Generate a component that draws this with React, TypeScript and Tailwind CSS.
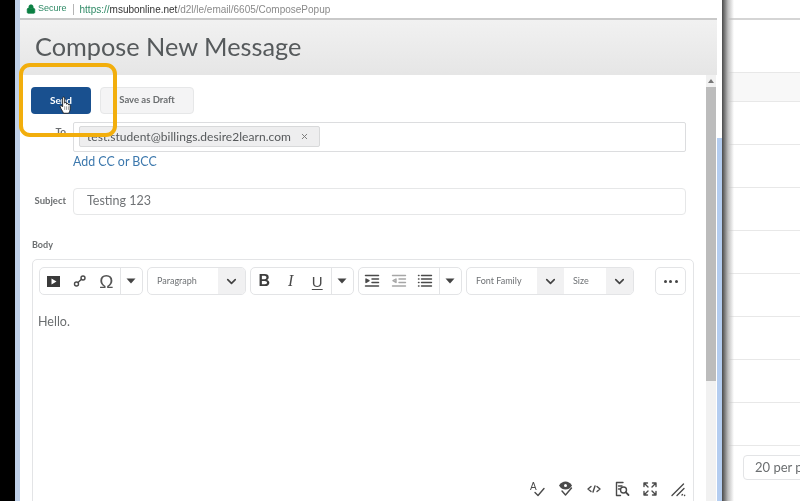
import React from "react";
import { Lock, X, ChevronDown } from "lucide-react";

const Caret = () => (
  <svg width="10" height="6" viewBox="0 0 10 6"><path d="M0.5 0.5h9L5 5.5z" fill="#444" /></svg>
);
const Chev = () => <ChevronDown size={15} strokeWidth={2.6} color="#444" />;

const I = ({ children }: { children: React.ReactNode }) => (
  <svg width="18" height="18" viewBox="0 0 18 18" fill="none" stroke="#4a4a4a" strokeWidth="1.4" strokeLinecap="round" strokeLinejoin="round">
    {children}
  </svg>
);

function Btn({ children }: { children: React.ReactNode }) {
  return <div className="flex h-full w-[26.5px] items-center justify-center">{children}</div>;
}

function Group({ children, w }: { children: React.ReactNode; w: string }) {
  return (
    <div className={`flex h-[28px] items-center rounded-[5px] border border-[#e3e4e6] bg-white ${w}`}>{children}</div>
  );
}

function SplitSel({ label, w }: { label: string; w: string }) {
  return (
    <div className={`flex h-full items-center justify-between ${w}`}>
      <span className="pl-[9px] text-[9px] text-[#6f7275]">{label}</span>
      <span className="flex h-full w-[27px] items-center justify-center bg-[#f1f1f2]">
        <Chev />
      </span>
    </div>
  );
}

function Caretbox() {
  return (
    <div className="flex h-full flex-1 items-center justify-center border-l border-[#e3e4e6]">
      <Caret />
    </div>
  );
}

export default function App() {
  return (
    <div className="relative flex h-[501px] w-[800px] overflow-hidden bg-white font-['Lato',sans-serif] blur-[0.45px]">
      <div className="w-[15px] shrink-0 bg-black" />
      <div className="w-[5px] shrink-0 bg-[#bfd0e8]" />

      <div className="flex w-[697px] shrink-0 flex-col overflow-hidden bg-white">
        <div className="flex h-[18px] shrink-0 items-center pl-[6px] font-['Liberation_Sans',sans-serif] text-[10px]">
          <Lock size={10} fill="#0b8043" color="#0b8043" />
          <span className="ml-[2px] text-[9px] text-[#2f8a66]">Secure</span>
          <span className="mx-[6px] h-[11px] w-px bg-[#b5b5b5]" />
          <span>
            <span className="text-[#2f8a66]">https://</span>
            <span className="text-[#333]">msubonline.net</span>
            <span className="text-[#8a8a8a]">/d2l/le/email/6605/ComposePopup</span>
          </span>
        </div>
        <div className="flex h-[57px] shrink-0 items-center border-t-2 border-b border-t-[#c9c9c9] border-b-[#e6e6e6] bg-gradient-to-b from-[#f1f1f1] to-[#e6e6e6] pl-[15px]">
          <h1 className="text-[25.3px] font-normal text-[#565a5c]">Compose New Message</h1>
        </div>

        <div className="flex min-h-0 flex-1">
          <main className="w-[686px] shrink-0 overflow-hidden">
            <div className="mt-[12px] ml-[11px] flex gap-[9px]">
              <button className="flex h-[27px] w-[60px] items-center justify-center rounded-[4px] bg-[#19508f] text-[10px] font-bold text-white">
                Send
              </button>
              <button className="flex h-[27px] w-[94px] items-center justify-center rounded-[4px] border border-[#e6e7e8] bg-[#f4f4f5] text-[9.5px] font-bold text-[#6b6e70]">
                Save as Draft
              </button>
            </div>

            <div className="mt-[8px] flex items-start">
              <label className="w-[46px] pt-[2px] text-right text-[10px] font-bold text-[#6b6e70]">To</label>
              <div className="ml-[7px] flex h-[30px] w-[613px] items-start rounded-[2px] border border-[#dcdddf] px-[5px] pt-[3px]">
                <div className="flex h-[21px] w-[241px] items-center justify-between rounded-[2px] border border-[#d8d9da] bg-[#eeeeef] pl-[7px] pr-[10px] text-[12px] tracking-[0.05px] whitespace-nowrap text-[#55585a]">
                  test.student@billings.desire2learn.com
                  <X size={9} strokeWidth={2.5} color="#777" />
                </div>
              </div>
            </div>
            <div className="mt-[1px] ml-[53px] text-[12.4px] leading-[18px] text-[#3c78ad]">Add CC or BCC</div>

            <div className="mt-[17px] flex items-center">
              <label className="w-[46px] text-right text-[9.5px] font-bold text-[#6b6e70]">Subject</label>
              <div className="ml-[7px] flex h-[27px] w-[613px] items-center rounded-[4px] border border-[#e6e7e8] pl-[13px] text-[12.5px] text-[#707376]">
                Testing 123
              </div>
            </div>

            <div className="mt-[24px] ml-[12px] text-[9px] leading-[12px] font-bold text-[#6b6e70]">Body</div>

            <div className="mt-[8px] ml-[12px] flex h-[250px] w-[662px] flex-col rounded-[5px] border border-[#e3e4e6] pt-[7px]">
              <div className="flex h-[28px] items-center pl-[6px]">
                <div className="flex gap-[4px]">
                  <Group w="w-[104px]">
                    <Btn><svg width="13" height="11" viewBox="0 0 13 11"><path fillRule="evenodd" d="M0 0h13v11H0zM4.500 2.500v6L9.500 5.500z" fill="#3a3a3a" /></svg></Btn>
                    <Btn><I><circle cx="5.500" cy="12" r="2" /><circle cx="12" cy="6" r="2" /><path d="M7 10.600l3.500-3.300" /></I></Btn>
                    <Btn><span className="font-['Liberation_Sans',sans-serif] text-[19px] leading-none text-[#555]">Ω</span></Btn>
                    <Caretbox />
                  </Group>
                  <Group w="w-[99px] overflow-hidden">
                    <SplitSel label="Paragraph" w="w-full" />
                  </Group>
                  <Group w="w-[104px]">
                    <Btn><span className="font-['Liberation_Sans',sans-serif] text-[16px] font-bold text-[#3d3d3d]">B</span></Btn>
                    <Btn><span className="font-['Liberation_Serif',serif] text-[16px] text-[#4a4a4a] italic">I</span></Btn>
                    <Btn><span className="font-['Liberation_Sans',sans-serif] text-[15px] leading-[15px] text-[#4a4a4a] underline underline-offset-2">U</span></Btn>
                    <Caretbox />
                  </Group>
                  <Group w="w-[104px]">
                    <Btn><I><path d="M2.500 3.500h13M9 7h6.500M9 10.500h6.500M2.500 14h13" strokeWidth="1.500" /><path d="M3 7l3 1.700L3 10.500z" fill="#4a4a4a" /></I></Btn>
                    <Btn><I><g stroke="#a6a6a6"><path d="M2.500 3.500h13M9 7h6.500M9 10.500h6.500M2.500 14h13" /><path d="M6 7L3 8.700 6 10.500z" /></g></I></Btn>
                    <Btn><I><path d="M5.500 3.500h10M5.500 7h10M5.500 10.500h10M5.500 14h10" /><path d="M2.500 3.500h.5M2.500 7h.5M2.500 10.500h.5M2.500 14h.5" /></I></Btn>
                    <Caretbox />
                  </Group>
                  <Group w="w-[168px] overflow-hidden">
                    <SplitSel label="Font Family" w="w-[97px]" />
                    <SplitSel label="Size" w="w-[69px]" />
                  </Group>
                </div>
                <div className="ml-[21px] flex h-[28px] w-[31px] items-center justify-center gap-[2.500px] rounded-[5px] border border-[#e3e4e6]">
                  <span className="h-[3px] w-[3px] rounded-full bg-[#444]" />
                  <span className="h-[3px] w-[3px] rounded-full bg-[#444]" />
                  <span className="h-[3px] w-[3px] rounded-full bg-[#444]" />
                </div>
              </div>

              <p className="mt-[19px] pl-[5px] text-[12.5px] leading-[16px] text-[#6b6e70]">Hello.</p>

              <div className="mt-auto mb-[10px] flex justify-end gap-[10px] pr-[6.500px]">
                <I><text x="1" y="10" fontSize="10" fill="#4a4a4a" stroke="none" fontFamily="Liberation Sans">A</text><path d="M6 12.500l3 3 6-7" /></I>
                <I><path d="M2 5.500C4 2.500 6 1.500 8.500 1.500S13 2.500 15 5.500C13 8.500 11 9.500 8.500 9.500S4 8.500 2 5.500z" fill="#4a4a4a" stroke="none" /><circle cx="8.500" cy="5.500" r="1.500" fill="#fff" stroke="none" /><path d="M5 11l3.500 4 6-7" /></I>
                <I><path d="M6 6.500L3 9l3 2.500M12 6.500L15 9l-3 2.500M10 6l-2 6" /></I>
                <I><path d="M10 2.500H3.500v13h4M5.500 6H9M5.500 9H7" /><circle cx="10.500" cy="10" r="3" /><path d="M12.700 12.200L15.500 15" strokeWidth="1.800" /></I>
                <I><path d="M3 6.500V3h3.500M11.500 3H15v3.500M15 11.500V15h-3.500M6.500 15H3v-3.500M3.500 3.500L7 7M14.500 3.500L11 7M14.500 14.500L11 11M3.500 14.500L7 11" /></I>
                <I><path d="M3 15.500L14.500 4M8 15.500l7-7" /><path d="M13 15l.5-.5M15.500 15.500l.2-.2" /></I>
              </div>
            </div>
          </main>
          <div className="flex w-[10px] shrink-0 flex-col bg-[#f1f1f1]">
            <div className="flex h-[12px] items-center justify-center">
              <svg width="6" height="4" viewBox="0 0 6 4"><path d="M0 4l3-4 3 4z" fill="#777" /></svg>
            </div>
            <div className="h-[294px] bg-[#bcbcbc]" />
          </div>
          <div className="w-[1px] shrink-0 bg-white" />
        </div>
      </div>

      <div className="flex w-[5px] shrink-0 flex-col">
        <div className="h-[138px] bg-white" />
        <div className="flex-1 bg-[#b4cdf0]" />
      </div>

      <aside className="flex min-w-0 flex-1 flex-col text-[#6b6e70]">
        <div className="h-[20px] border-b-2 border-[#d5d5d5]" />
        <div className="h-[53px] border-b border-[#e8e8e8]" />
        <div className="h-[29px] border-b border-[#e8e8e8] bg-[#f8f8f8]" />
        {[0, 1, 2, 3, 4, 5, 6, 7].map((i) => (
          <div key={i} className="h-[43px] shrink-0 border-b border-[#e8e8e8]" />
        ))}
        <div className="mt-[9px] ml-[21px] flex h-[25px] w-[80px] shrink-0 items-center rounded-[4px] border border-[#e3e4e6] pl-[11px] text-[13px] whitespace-nowrap">
          20 per page
        </div>
      </aside>

      <div className="absolute top-0 bottom-0 left-[722px] w-[12px] bg-gradient-to-r from-[#4a4a4a] via-[#bdbdbd] to-transparent" />
      <div className="absolute top-[63px] left-[19px] h-[74px] w-[98px] rounded-[11px] border-[4px] border-[#f2ae0c]" />
      <div className="absolute top-[96px] left-[59px]">
        <svg width="12" height="18" viewBox="0 0 11 17.500">
          <path d="M3.200 2C3.200.6 5.200.6 5.200 2V7C5.200 6 7 6 7 7V8C7 7 8.800 7 8.800 8V8.800C8.800 8 10.500 8 10.500 9V12.500C10.500 14.500 9.500 16 9 16.800H4C3.500 15 1 12 .8 10.500C.6 9 2 9 3.200 10.500Z" fill="#fff" stroke="#222" strokeWidth="0.9" strokeLinejoin="round" />
          <path d="M5.200 10v3.500M7 10v3.500M8.800 10v3.500" stroke="#666" strokeWidth="0.6" />
        </svg>
      </div>
    </div>
  );
}
